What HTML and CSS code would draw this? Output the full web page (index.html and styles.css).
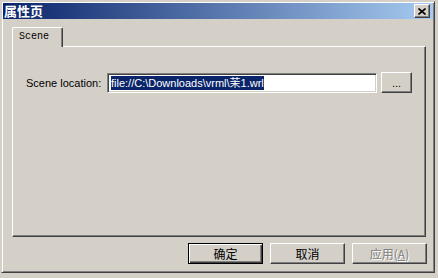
FILE: index.html
```html
<!DOCTYPE html>
<html lang="zh-CN">
<head>
  <meta charset="UTF-8">
  <title>属性页</title>
  <link rel="stylesheet" href="styles.css">
</head>
<body>

  <div class="window">
    <div class="titlebar">
      <span class="title">属性页</span>
      <span class="close-btn">
        <svg width="8" height="7" viewBox="0 0 8 7">
          <path d="M0.5 0.5 L7.5 6.5 M7.5 0.5 L0.5 6.5" stroke="#000" stroke-width="1.6" fill="none"/>
        </svg>
      </span>
    </div>

    <div class="dialog-body">
      <div class="tabs">
        <div class="tab active">Scene</div>
      </div>

      <div class="tab-panel">
        <div class="field-row">
          <label class="field-label">Scene location:</label>
          <div class="text-box"><span class="selected">file://C:\Downloads\vrml\茉1.wrl</span></div>
          <button class="btn btn-browse">...</button>
        </div>
      </div>

      <div class="button-row">
        <button class="btn btn-default">确定</button>
        <button class="btn">取消</button>
        <button class="btn" disabled>应用(<u>A</u>)</button>
      </div>
    </div>
  </div>

</body>
</html>
```

FILE: styles.css
```css
body {
  margin: 0;
  background: #d4d0c8;
  font-family: "Liberation Sans", Arial, "Noto Sans CJK SC", sans-serif;
  font-size: 11px;
  color: #000;
}
.window {
  box-sizing: border-box;
  width: 434px;
  height: 272px;
  margin: 1px 0 0 1px;
  padding: 1px;
  background: #d4d0c8;
  border: 1px solid;
  border-color: #d4d0c8 #404040 #404040 #d4d0c8;
  box-shadow: inset 1px 1px #fff, inset -1px -1px #808080;
  display: flex;
  flex-direction: column;
}
.titlebar {
  height: 16px;
  background: linear-gradient(to right, #0a246a, #a6caf0);
  display: flex;
  align-items: center;
  justify-content: space-between;
  padding: 0 3px 0 1px;
}
.title {
  color: #fff;
  font-family: "Noto Sans CJK SC", sans-serif;
  font-weight: bold;
  font-size: 13px;
  line-height: 16px;
}
.close-btn {
  box-sizing: border-box;
  width: 16px;
  height: 14px;
  background: #d4d0c8;
  border: 1px solid;
  border-color: #fff #404040 #404040 #fff;
  box-shadow: inset -1px -1px #808080;
  display: flex;
  align-items: center;
  justify-content: center;
}
.dialog-body {
  flex: 1;
  padding: 8px 7px 7px 9px;
  display: flex;
  flex-direction: column;
}
.tabs {
  height: 19px;
  display: flex;
  align-items: flex-start;
}
.tab {
  box-sizing: border-box;
  height: 20px;
  width: 51px;
  padding-left: 6px;
  font-family: "Liberation Mono", "Courier New", monospace;
  font-size: 10px;
  line-height: 18px;
  background: #d4d0c8;
  border: 1px solid;
  border-bottom: none;
  border-color: #fff #404040 #fff #fff;
  border-radius: 2px 2px 0 0;
  box-shadow: inset -1px 0 #808080;
}
.tab.active {
  position: relative;
  z-index: 1;
}
.tab-panel {
  box-sizing: border-box;
  height: 191px;
  border: 1px solid;
  border-color: #fff #404040 #404040 #fff;
  box-shadow: inset -1px -1px #808080;
  padding: 25px 0 0 13px;
}
.field-row {
  display: flex;
  align-items: center;
}
.field-label {
  width: 81px;
  line-height: 20px;
}
.text-box {
  box-sizing: border-box;
  width: 270px;
  height: 20px;
  background: #fff;
  border: 1px solid;
  border-color: #808080 #fff #fff #808080;
  box-shadow: inset 1px 1px #404040, inset -1px -1px #d4d0c8;
  padding: 2px 0 0 3px;
  font-family: "Liberation Sans", Arial, "Noto Sans CJK SC", sans-serif;
  white-space: nowrap;
  overflow: hidden;
}
.selected {
  background: #0a246a;
  color: #fff;
  line-height: 14px;
  display: inline-block;
}
.btn {
  box-sizing: border-box;
  height: 21px;
  width: 75px;
  padding: 0;
  background: #d4d0c8;
  border: 1px solid;
  border-color: #fff #404040 #404040 #fff;
  box-shadow: inset -1px -1px #808080;
  font-family: "Noto Sans CJK SC", sans-serif;
  font-size: 12px;
  color: #000;
}
.btn-browse {
  width: 31px;
  margin-left: 4px;
  font-family: "Liberation Sans", Arial, sans-serif;
  font-size: 11px;
  line-height: 14px;
}
.btn-default {
  border: 1px solid #000;
  box-shadow: inset 1px 1px #fff, inset -1px -1px #404040, inset -2px -2px #808080;
}
.btn:disabled {
  color: #808080;
  text-shadow: 1px 1px #fff;
}
.button-row {
  margin-top: 6px;
  margin-right: -1px;
  display: flex;
  justify-content: flex-end;
  gap: 7px;
}
```
